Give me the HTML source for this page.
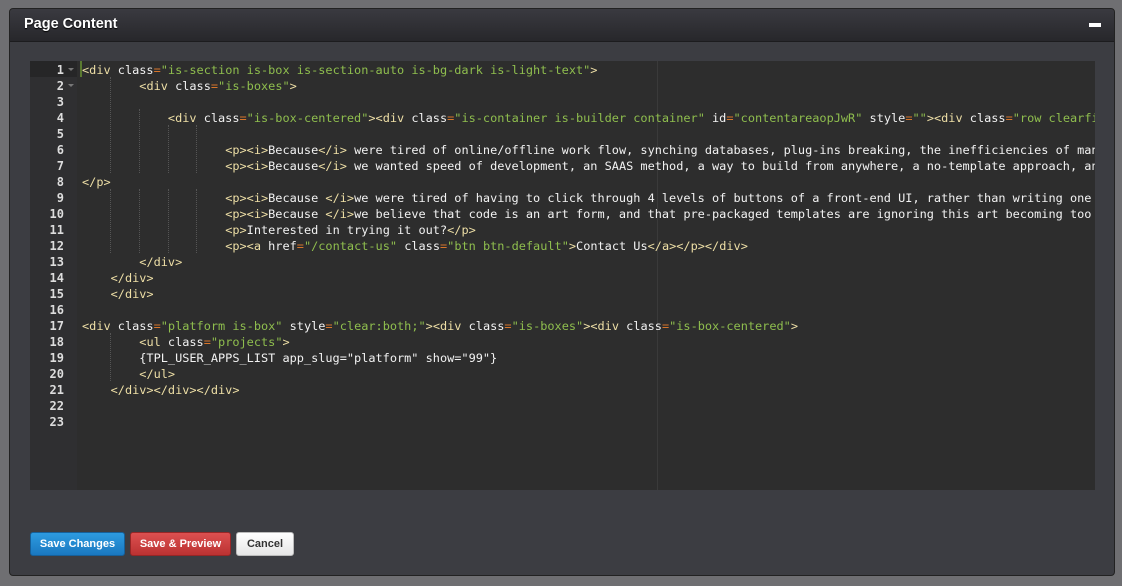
<!DOCTYPE html>
<html><head><meta charset="utf-8"><style>
body{margin:0;width:1122px;height:586px;background:#6f6f72;overflow:hidden;font-family:"Liberation Sans",sans-serif}
.panel{position:absolute;left:9px;top:8px;width:1106px;height:568px;background:#3c3d42;border:1px solid #222;border-radius:4px;box-sizing:border-box}
.hd{height:32px;background:linear-gradient(#3a3a40,#27272b);border-bottom:1px solid #1c1c1e;border-radius:4px 4px 0 0;color:#fff;font-weight:bold;font-size:14.5px;line-height:31px;padding-left:14px;text-shadow:0 1px 1px #000}
.min{position:absolute;right:13px;top:14px;width:12px;height:4px;background:#fff}
.ed{position:absolute;left:30px;top:61px;width:1065px;height:429px;background:#2d2d2d;overflow:hidden}
.gut{position:absolute;left:0;top:0;width:47px;height:100%;background:#2f2f31}
.act{position:absolute;left:0;top:0;width:47px;height:16px;background:#262627}
.nums{position:absolute;left:0;top:1px;width:34px;text-align:right;font:bold 12px/16px "DejaVu Sans Mono",monospace;color:#ddd}
.code{position:absolute;left:52px;top:1px;font:11.9px/16px "DejaVu Sans Mono",monospace;color:#f2f2f2;white-space:pre}
.t{color:#eedfa6}.s{color:#8fbe4e}.e{color:#d7752a}
.pm{position:absolute;left:627px;top:0;width:1px;height:100%;background:#3a3a3a}
.g{position:absolute;width:0;border-left:1px dotted #555}
.btn{position:absolute;top:532px;height:24px;border-radius:3px;font:bold 11px/23px "Liberation Sans",sans-serif;text-align:center;color:#fff;box-sizing:border-box}
.ar{position:absolute;left:38px;width:0;height:0;border-left:3px solid transparent;border-right:3px solid transparent;border-top:3px solid #777}
</style></head><body>
<div class="panel"><div class="hd">Page Content</div><div class="min"></div></div>
<div class="ed">
<div class="gut"></div><div class="act"></div><div class="pm"></div>
<div class="ar" style="top:7px"></div><div class="ar" style="top:23px"></div>
<div style="position:absolute;left:50px;top:0;width:2px;height:16px;background:#5a7a30"></div>
<div class="g" style="left:80px;top:16px;height:96px"></div>
<div class="g" style="left:80px;top:128px;height:64px"></div>
<div class="g" style="left:109px;top:48px;height:64px"></div>
<div class="g" style="left:109px;top:128px;height:64px"></div>
<div class="g" style="left:138px;top:64px;height:48px"></div>
<div class="g" style="left:138px;top:128px;height:64px"></div>
<div class="g" style="left:166px;top:64px;height:48px"></div>
<div class="g" style="left:166px;top:128px;height:64px"></div>
<div class="g" style="left:80px;top:272px;height:48px"></div>
<div class="nums">1<br>2<br>3<br>4<br>5<br>6<br>7<br>8<br>9<br>10<br>11<br>12<br>13<br>14<br>15<br>16<br>17<br>18<br>19<br>20<br>21<br>22<br>23</div>
<div class="code"><span class="t">&lt;div</span> class<span class="e">=</span><span class="s">"is-section is-box is-section-auto is-bg-dark is-light-text"</span><span class="t">&gt;</span>
        <span class="t">&lt;div</span> class<span class="e">=</span><span class="s">"is-boxes"</span><span class="t">&gt;</span>

            <span class="t">&lt;div</span> class<span class="e">=</span><span class="s">"is-box-centered"</span><span class="t">&gt;&lt;div</span> class<span class="e">=</span><span class="s">"is-container is-builder container"</span> id<span class="e">=</span><span class="s">"contentareaopJwR"</span> style<span class="e">=</span><span class="s">""</span><span class="t">&gt;&lt;div</span> class<span class="e">=</span><span class="s">"row clearfix"</span>

                    <span class="t">&lt;p&gt;&lt;i&gt;</span>Because<span class="t">&lt;/i&gt;</span> were tired of online/offline work flow, synching databases, plug-ins breaking, the inefficiencies of many
                    <span class="t">&lt;p&gt;&lt;i&gt;</span>Because<span class="t">&lt;/i&gt;</span> we wanted speed of development, an SAAS method, a way to build from anywhere, a no-template approach, and
<span class="t">&lt;/p&gt;</span>
                    <span class="t">&lt;p&gt;&lt;i&gt;</span>Because <span class="t">&lt;/i&gt;</span>we were tired of having to click through 4 levels of buttons of a front-end UI, rather than writing one
                    <span class="t">&lt;p&gt;&lt;i&gt;</span>Because <span class="t">&lt;/i&gt;</span>we believe that code is an art form, and that pre-packaged templates are ignoring this art becoming too
                    <span class="t">&lt;p&gt;</span>Interested in trying it out?<span class="t">&lt;/p&gt;</span>
                    <span class="t">&lt;p&gt;&lt;a</span> href<span class="e">=</span><span class="s">"/contact-us"</span> class<span class="e">=</span><span class="s">"btn btn-default"</span><span class="t">&gt;</span>Contact Us<span class="t">&lt;/a&gt;&lt;/p&gt;&lt;/div&gt;</span>
        <span class="t">&lt;/div&gt;</span>
    <span class="t">&lt;/div&gt;</span>
    <span class="t">&lt;/div&gt;</span>

<span class="t">&lt;div</span> class<span class="e">=</span><span class="s">"platform is-box"</span> style<span class="e">=</span><span class="s">"clear:both;"</span><span class="t">&gt;&lt;div</span> class<span class="e">=</span><span class="s">"is-boxes"</span><span class="t">&gt;&lt;div</span> class<span class="e">=</span><span class="s">"is-box-centered"</span><span class="t">&gt;</span>
        <span class="t">&lt;ul</span> class<span class="e">=</span><span class="s">"projects"</span><span class="t">&gt;</span>
        {TPL_USER_APPS_LIST app_slug="platform" show="99"}
        <span class="t">&lt;/ul&gt;</span>
    <span class="t">&lt;/div&gt;&lt;/div&gt;&lt;/div&gt;</span>
</div>
</div>
<div class="btn" style="left:30px;width:95px;background:linear-gradient(#2d9be0,#1a78c0);border:1px solid #16609a">Save Changes</div>
<div class="btn" style="left:130px;width:101px;background:linear-gradient(#dc5050,#bb3232);border:1px solid #962626">Save &amp; Preview</div>
<div class="btn" style="left:236px;width:58px;background:linear-gradient(#fff,#e6e6e6);border:1px solid #bbb;color:#333">Cancel</div>
</body></html>
